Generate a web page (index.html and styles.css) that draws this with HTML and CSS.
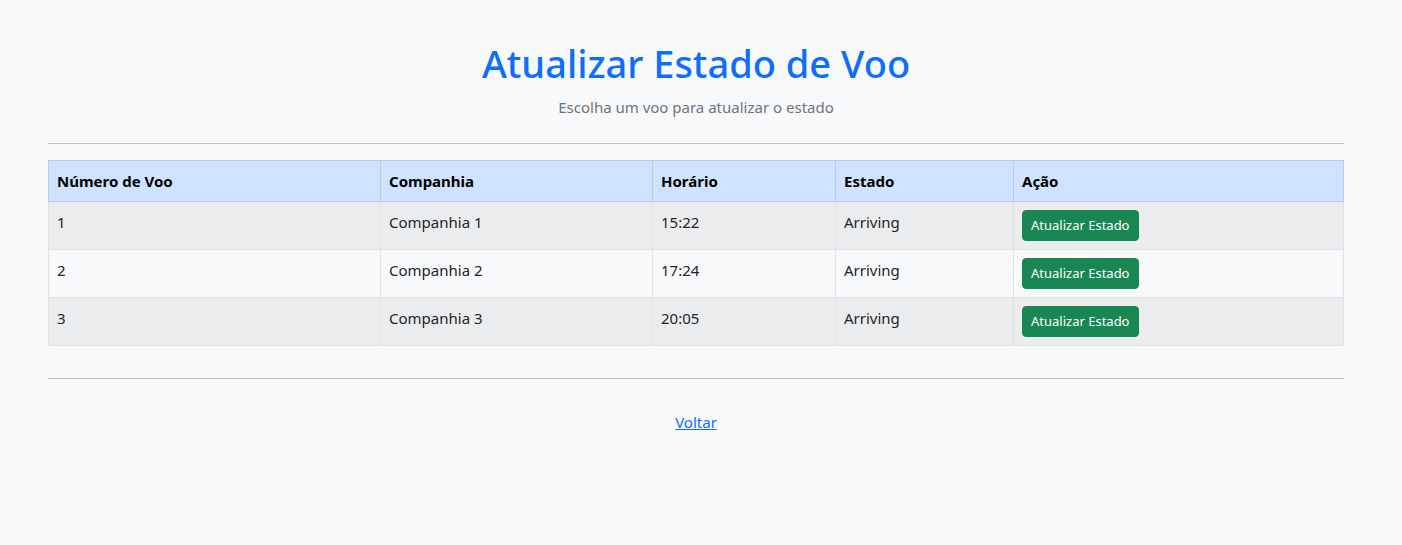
FILE: index.html
```html
<!DOCTYPE html>
<html lang="pt">
<head>
<meta charset="utf-8">
<title>Atualizar Estado de Voo</title>
<link rel="stylesheet" href="styles.css">
</head>
<body>
<main class="page">
  <header class="head">
    <h1 class="title">Atualizar Estado de Voo</h1>
    <p class="subtitle">Escolha um voo para atualizar o estado</p>
  </header>
  <hr class="rule">
  <table class="flights">
    <thead>
      <tr>
        <th class="c1">Número de Voo</th>
        <th class="c2">Companhia</th>
        <th class="c3">Horário</th>
        <th class="c4">Estado</th>
        <th class="c5">Ação</th>
      </tr>
    </thead>
    <tbody>
      <tr class="odd">
        <td>1</td><td>Companhia 1</td><td>15:22</td><td>Arriving</td>
        <td><button class="btn" type="button">Atualizar Estado</button></td>
      </tr>
      <tr>
        <td>2</td><td>Companhia 2</td><td>17:24</td><td>Arriving</td>
        <td><button class="btn" type="button">Atualizar Estado</button></td>
      </tr>
      <tr class="odd">
        <td>3</td><td>Companhia 3</td><td>20:05</td><td>Arriving</td>
        <td><button class="btn" type="button">Atualizar Estado</button></td>
      </tr>
    </tbody>
  </table>
  <hr class="rule rule-bottom">
  <div class="back"><a href="#" class="back-link">Voltar</a></div>
</main>
</body>
</html>
```
FILE: styles.css
```css
* { box-sizing: border-box; }
html, body { margin: 0; padding: 0; }
body {
  background: #f8f9fa;
  color: #212529;
  font-family: "Noto Sans", "Open Sans", sans-serif;
  font-size: 15px;
  line-height: 24px;
  height: 545px;
}
.page {
  width: 1296px;
  margin-left: 48px;
  padding-top: 39px;
}
.head { text-align: center; }
.title {
  margin: 0 0 8px;
  font-size: 38px;
  font-weight: 500;
  line-height: 48px;
  color: #0d6efd;
}
.subtitle {
  margin: 0;
  font-size: 15px;
  line-height: 24px;
  color: #6c757d;
}
.rule {
  margin: 24px 0 16px;
  border: 0;
  border-top: 1px solid #c2c3c4;
  height: 0;
}
.rule-bottom { margin-top: 32px; }
.flights {
  width: 100%;
  border-collapse: collapse;
  margin: 0;
}
.flights th, .flights td {
  text-align: left;
  padding: 8px;
  border: 1px solid #dee2e6;
  vertical-align: top;
  line-height: 24px;
}
.flights th {
  font-weight: 700;
  background: #cfe2ff;
  border-color: #bacbe6;
  color: #000;
}
.flights tr.odd td { background: #ebecee; }
.c1 { width: 332px; }
.c2 { width: 272px; }
.c3 { width: 183px; }
.c4 { width: 178px; }
.btn {
  display: block;
  font-family: inherit;
  font-size: 13px;
  line-height: 21px;
  padding: 4px 8px;
  border: 1px solid #198754;
  border-radius: 4px;
  background: #198754;
  color: #fff;
  cursor: pointer;
  margin: 0;
}
.back {
  margin-top: 31px;
  text-align: center;
}
.back-link { color: #0d6efd; text-decoration: underline; }
```
